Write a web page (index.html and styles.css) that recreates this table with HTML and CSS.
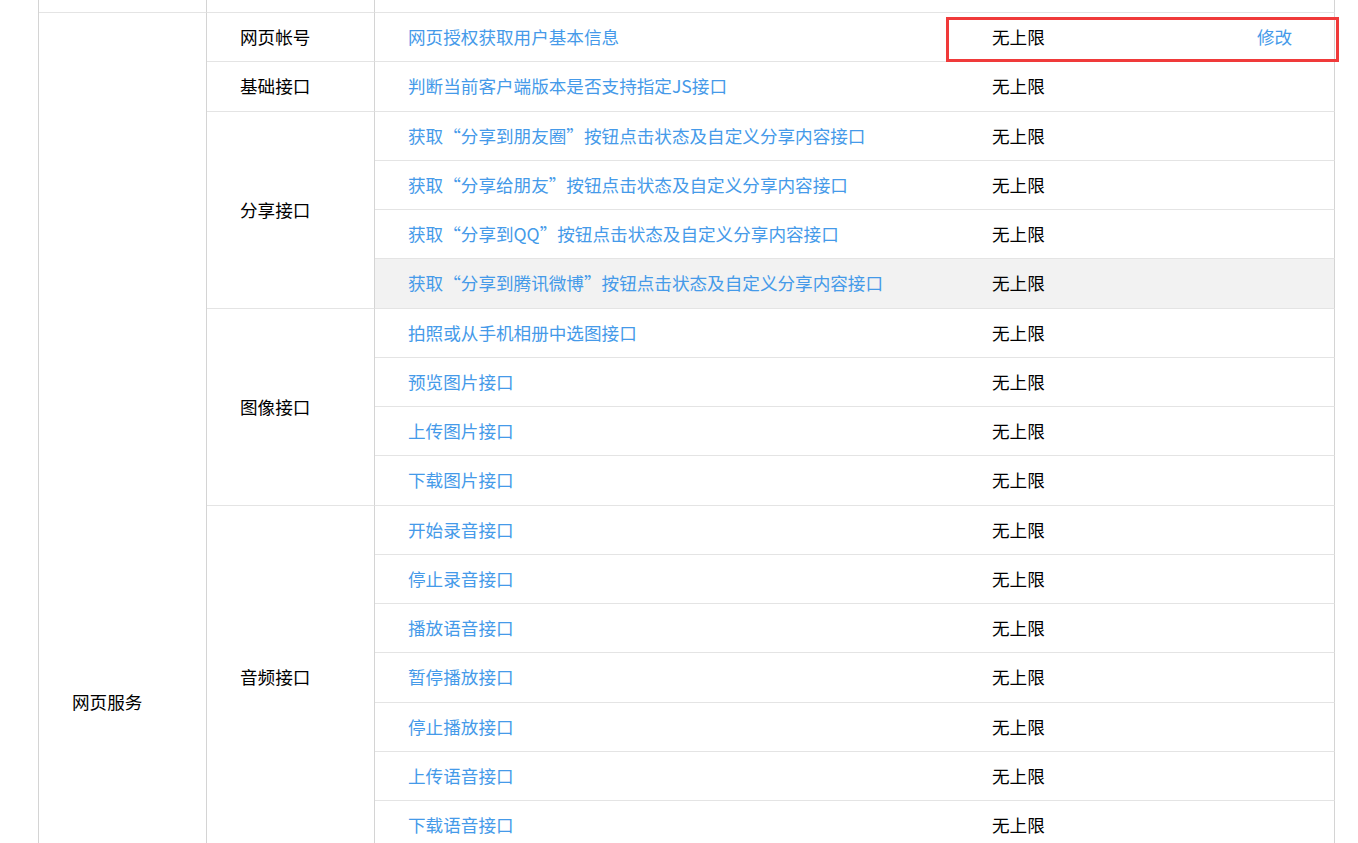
FILE: index.html
```html
<!DOCTYPE html>
<html lang="zh-CN">
<head>
<meta charset="utf-8">
<title>接口权限</title>
<link rel="stylesheet" href="styles.css">
</head>
<body>
<div class="page">
  <div class="table-wrap">
    <table class="perm-table">
      <colgroup>
        <col class="c-cat">
        <col class="c-group">
        <col class="c-name">
        <col class="c-limit">
        <col class="c-op">
      </colgroup>
      <tbody>
        <tr class="row-top">
          <td class="cat"></td>
          <td class="group"></td>
          <td class="name"></td>
          <td class="limit"></td>
          <td class="op"></td>
        </tr>
        <tr>
          <td class="cat" rowspan="28">网页服务</td>
          <td class="group">网页帐号</td>
          <td class="name"><a class="link" href="#">网页授权获取用户基本信息</a></td>
          <td class="limit">无上限</td>
          <td class="op"><a class="link" href="#">修改</a></td>
        </tr>
        <tr>
          <td class="group">基础接口</td>
          <td class="name"><a class="link" href="#">判断当前客户端版本是否支持指定JS接口</a></td>
          <td class="limit">无上限</td>
          <td class="op"></td>
        </tr>
        <tr>
          <td class="group" rowspan="4">分享接口</td>
          <td class="name"><a class="link" href="#">获取“分享到朋友圈”按钮点击状态及自定义分享内容接口</a></td>
          <td class="limit">无上限</td>
          <td class="op"></td>
        </tr>
        <tr>
          <td class="name"><a class="link" href="#">获取“分享给朋友”按钮点击状态及自定义分享内容接口</a></td>
          <td class="limit">无上限</td>
          <td class="op"></td>
        </tr>
        <tr>
          <td class="name"><a class="link" href="#">获取“分享到QQ”按钮点击状态及自定义分享内容接口</a></td>
          <td class="limit">无上限</td>
          <td class="op"></td>
        </tr>
        <tr class="hover">
          <td class="name"><a class="link" href="#">获取“分享到腾讯微博”按钮点击状态及自定义分享内容接口</a></td>
          <td class="limit">无上限</td>
          <td class="op"></td>
        </tr>
        <tr>
          <td class="group" rowspan="4">图像接口</td>
          <td class="name"><a class="link" href="#">拍照或从手机相册中选图接口</a></td>
          <td class="limit">无上限</td>
          <td class="op"></td>
        </tr>
        <tr>
          <td class="name"><a class="link" href="#">预览图片接口</a></td>
          <td class="limit">无上限</td>
          <td class="op"></td>
        </tr>
        <tr>
          <td class="name"><a class="link" href="#">上传图片接口</a></td>
          <td class="limit">无上限</td>
          <td class="op"></td>
        </tr>
        <tr>
          <td class="name"><a class="link" href="#">下载图片接口</a></td>
          <td class="limit">无上限</td>
          <td class="op"></td>
        </tr>
        <tr>
          <td class="group" rowspan="7">音频接口</td>
          <td class="name"><a class="link" href="#">开始录音接口</a></td>
          <td class="limit">无上限</td>
          <td class="op"></td>
        </tr>
        <tr>
          <td class="name"><a class="link" href="#">停止录音接口</a></td>
          <td class="limit">无上限</td>
          <td class="op"></td>
        </tr>
        <tr>
          <td class="name"><a class="link" href="#">播放语音接口</a></td>
          <td class="limit">无上限</td>
          <td class="op"></td>
        </tr>
        <tr>
          <td class="name"><a class="link" href="#">暂停播放接口</a></td>
          <td class="limit">无上限</td>
          <td class="op"></td>
        </tr>
        <tr>
          <td class="name"><a class="link" href="#">停止播放接口</a></td>
          <td class="limit">无上限</td>
          <td class="op"></td>
        </tr>
        <tr>
          <td class="name"><a class="link" href="#">上传语音接口</a></td>
          <td class="limit">无上限</td>
          <td class="op"></td>
        </tr>
        <tr>
          <td class="name"><a class="link" href="#">下载语音接口</a></td>
          <td class="limit">无上限</td>
          <td class="op"></td>
        </tr>
        <tr>
          <td class="group">智能接口</td>
          <td class="name"><a class="link" href="#">识别音频并返回识别结果接口</a></td>
          <td class="limit">无上限</td>
          <td class="op"></td>
        </tr>
        <tr>
          <td class="group">设备信息</td>
          <td class="name"><a class="link" href="#">获取网络状态接口</a></td>
          <td class="limit">无上限</td>
          <td class="op"></td>
        </tr>
        <tr>
          <td class="group" rowspan="2">地理位置</td>
          <td class="name"><a class="link" href="#">使用微信内置地图查看位置接口</a></td>
          <td class="limit">无上限</td>
          <td class="op"></td>
        </tr>
        <tr>
          <td class="name"><a class="link" href="#">获取地理位置接口</a></td>
          <td class="limit">无上限</td>
          <td class="op"></td>
        </tr>
        <tr>
          <td class="group" rowspan="7">界面操作</td>
          <td class="name"><a class="link" href="#">隐藏右上角菜单接口</a></td>
          <td class="limit">无上限</td>
          <td class="op"></td>
        </tr>
        <tr>
          <td class="name"><a class="link" href="#">显示右上角菜单接口</a></td>
          <td class="limit">无上限</td>
          <td class="op"></td>
        </tr>
        <tr>
          <td class="name"><a class="link" href="#">关闭当前网页窗口接口</a></td>
          <td class="limit">无上限</td>
          <td class="op"></td>
        </tr>
        <tr>
          <td class="name"><a class="link" href="#">批量隐藏功能按钮接口</a></td>
          <td class="limit">无上限</td>
          <td class="op"></td>
        </tr>
        <tr>
          <td class="name"><a class="link" href="#">批量显示功能按钮接口</a></td>
          <td class="limit">无上限</td>
          <td class="op"></td>
        </tr>
        <tr>
          <td class="name"><a class="link" href="#">隐藏所有非基础按钮接口</a></td>
          <td class="limit">无上限</td>
          <td class="op"></td>
        </tr>
        <tr>
          <td class="name"><a class="link" href="#">显示所有功能按钮接口</a></td>
          <td class="limit">无上限</td>
          <td class="op"></td>
        </tr>
      </tbody>
    </table>
    <div class="highlight-box" aria-hidden="true"></div>
  </div>
</div>
</body>
</html>
```

FILE: styles.css
```css
html, body {
  margin: 0;
  padding: 0;
  background: #ffffff;
}

body {
  font-family: "Microsoft YaHei", "Noto Sans CJK SC", "Noto Sans", sans-serif;
  font-size: 17.6px;
  color: #000000;
}

.page {
  padding-left: 38px;
}

.table-wrap {
  position: relative;
  width: 1296px;
}

.perm-table {
  width: 1296px;
  table-layout: fixed;
  border-collapse: separate;
  border-spacing: 0;
  border-left: 1px solid #d4d4d4;
}

.c-cat { width: 168px; }
.c-group { width: 168px; }
.c-name { width: 584px; }
.c-limit { width: 265px; }
.c-op { width: 111px; }

.perm-table tr {
  height: 49.25px;
}

.perm-table tr.row-top {
  height: 13px;
}

.perm-table td {
  padding: 0 0 0 33px;
  border-bottom: 1px solid #e4e4e4;
  vertical-align: middle;
  white-space: nowrap;
  line-height: 24px;
}

.perm-table td.cat,
.perm-table td.group {
  border-right: 1px solid #d4d4d4;
}

.perm-table td.op {
  border-right: 1px solid #d4d4d4;
}

.perm-table tr.hover td.name,
.perm-table tr.hover td.limit,
.perm-table tr.hover td.op {
  background: #f2f2f2;
}

.link {
  color: #459ae9;
  text-decoration: none;
}

.highlight-box {
  position: absolute;
  left: 908px;
  top: 17px;
  width: 387px;
  height: 39px;
  border: 3px solid #f03a3a;
}
```
